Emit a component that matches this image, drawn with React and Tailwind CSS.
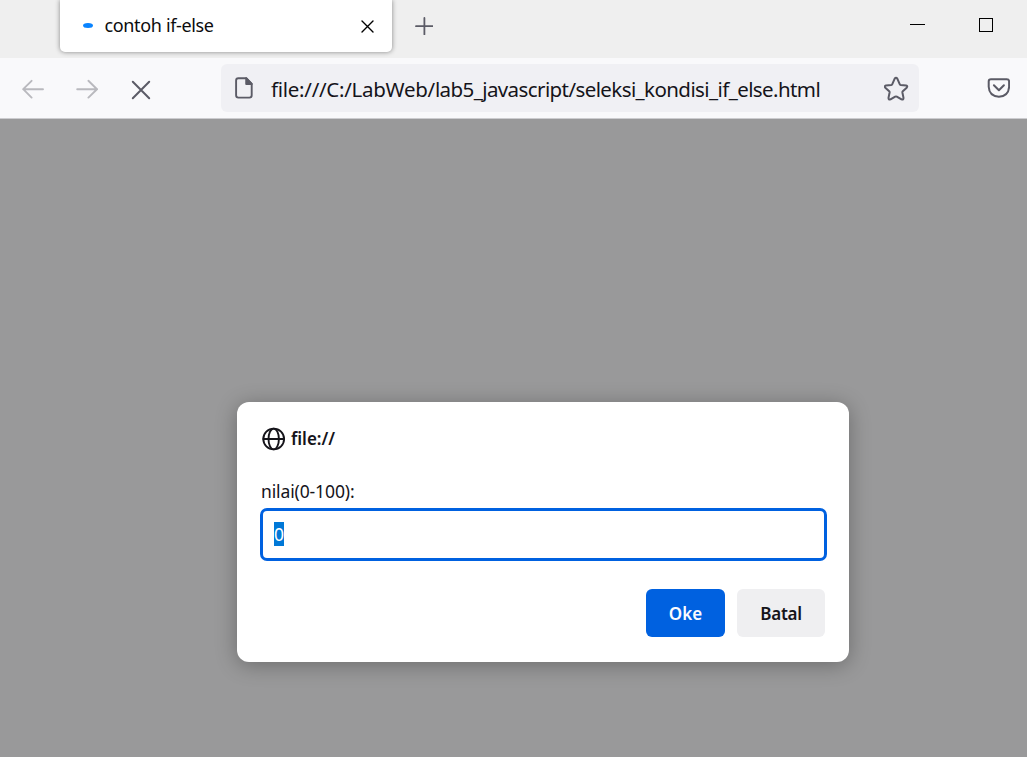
import React from "react";

function Icon({ children, className, viewBox, width = 1.6 }) {
  return (
    <svg
      className={className}
      viewBox={viewBox}
      fill="none"
      stroke="currentColor"
      strokeWidth={width}
      strokeLinecap="round"
      strokeLinejoin="round"
    >
      {children}
    </svg>
  );
}

function TabStrip() {
  return (
    <header className="flex h-[58px] items-start bg-[#efefef] pl-[60px]">
      <div className="flex h-[52px] w-[332px] shrink-0 items-center rounded-b-[5px] bg-white pl-[23px] pr-[18px] shadow-[0_0_5px_rgba(0,0,0,0.45)]">
        <span className="mb-[2px] h-[5px] w-[10px] shrink-0 rounded-[50%] bg-[#0a84ff]" />
        <span className="mb-[3px] ml-[11.5px] whitespace-nowrap text-[18px] leading-6 tracking-[-0.35px] text-[#0c0c0d]">
          contoh if-else
        </span>
        <Icon className="ml-auto h-[13px] w-[13px] text-black" viewBox="0 0 13 13" width={1.4}>
          <path d="M1 1l11 11M12 1L1 12" />
        </Icon>
      </div>
      <Icon className="ml-[23px] mt-[17px] h-[18px] w-[18px] shrink-0 text-[#5b5b66]" viewBox="0 0 18 18" width={1.8}>
        <path d="M9.4 1v16.4M1 9.2h16.6" />
      </Icon>
      <div className="ml-auto mt-6 h-px w-[15px] bg-black" />
      <div className="ml-[54px] mr-[34px] mt-[18px] h-[14px] w-[14px] border border-black" />
    </header>
  );
}

function Toolbar() {
  return (
    <nav className="flex h-[61px] items-center border-b border-[#cccccf] bg-[#f9f9fb] pl-[22px] pr-[17px]">
      <Icon className="mt-px h-[20px] w-[22px] shrink-0 text-[#b9b9be]" viewBox="0 0 22 20" width={1.9}>
        <path d="M21 10.2H1.2M9.6 1.8L1.2 10.2l8.4 8.4" />
      </Icon>
      <Icon className="ml-8 mt-px h-[20px] w-[22px] shrink-0 text-[#b9b9be]" viewBox="0 0 22 20" width={1.9}>
        <path d="M1.2 10.2h20M12.4 1.8l8.6 8.4-8.6 8.4" />
      </Icon>
      <Icon className="ml-[33px] mt-1 h-[20px] w-[20px] shrink-0 text-[#5b5b66]" viewBox="0 0 20 20" width={2}>
        <path d="M1.8 1.8l16.4 16.4M18.2 1.8L1.8 18.2" />
      </Icon>
      <div className="ml-[70px] flex h-12 w-[698px] shrink-0 items-center rounded-[6px] bg-[#f0f0f4] pl-[13px] pr-[10px]">
        <Icon className="h-[22px] w-[19px] shrink-0 text-[#5b5b66]" viewBox="-0.4 0 19 22" width={1.9}>
          <path d="M11.8 1.2H4Q1.7 1.2 1.7 3.5V18.3Q1.7 20.6 4 20.6H15Q17.3 20.6 17.3 18.3V7z" />
          <path d="M11.8 1.2V7h5.5z" fill="currentColor" />
        </Icon>
        <span className="ml-[18px] mt-[2px] whitespace-nowrap text-[20.5px] leading-7 tracking-[-0.59px] text-[#15141a]">
          <span className="tracking-[-0.28px]">file:///C:/LabWeb/</span>
          lab5_javascript/seleksi_kondisi_if_else.html
        </span>
        <Icon className="ml-auto h-[25px] w-[25px] shrink-0 text-[#5b5b66]" viewBox="0.5 -0.3 25 25" width={2}>
          <path d="M11.2 2.3Q12.5 0.4 13.8 2.3L16.2 7.8Q16.5 8.5 17.2 8.6L22.6 9.2Q24.5 9.8 23.2 11.4L19.3 15Q18.8 15.5 18.9 16.2L20 21.6Q20 23.8 18 23.1L13.3 20.3Q12.5 19.9 11.7 20.3L7 23.1Q5 23.8 5 21.6L6.1 16.2Q6.2 15.5 5.7 15L1.8 11.4Q.5 9.8 2.4 9.2L7.8 8.6Q8.5 8.5 8.8 7.8z" />
        </Icon>
      </div>
      <Icon className="ml-auto h-[20px] w-[23px] shrink-0 text-[#5b5b66]" viewBox="-0.4 0 23 20" width={2}>
        <path d="M3.6 1.2H19.4Q21.7 1.2 21.7 3.5V8.8Q21.2 18.2 11.5 18.8Q1.8 18.2 1.3 8.8V3.5Q1.3 1.2 3.6 1.2z" />
        <path d="M6.5 7.2l5 5 5-5" />
      </Icon>
    </nav>
  );
}

function PromptDialog() {
  return (
    <section className="ml-[237px] mt-[283px] flex h-[260px] w-[612px] flex-col rounded-[12px] bg-white px-6 pt-[22px] text-[#15141a] shadow-[0_3px_21px_rgba(0,0,0,0.3)]">
      <div className="flex h-[30px] items-center">
        <Icon className="ml-px h-[24px] w-[24px]" viewBox="0 0 24 24" width={1.9}>
          <circle cx="11.7" cy="12" r="10.4" />
          <ellipse cx="11.7" cy="12" rx="5.2" ry="10.4" />
          <path d="M1.4 12h20.6" />
        </Icon>
        <span className="mb-px ml-[5px] whitespace-nowrap text-[17px] font-semibold leading-6">file://</span>
      </div>
      <label className="mt-[25px] whitespace-nowrap text-[17.5px] leading-6 tracking-[-0.12px]">nilai(0-100):</label>
      <div className="-ml-px mt-[5px] flex h-[53px] w-[567px] items-center rounded-[7px] border-[3px] border-[#0061e0] pb-px pl-[11px]">
        <span className="h-6 bg-[#0078d7] text-[17.5px] leading-6 text-white">0</span>
      </div>
      <div className="mt-7 flex justify-end gap-3 text-[17px] font-semibold">
        <button className="h-12 w-[79px] rounded-[6px] bg-[#0061e0] pt-[2px] text-[#fbfbfe]">Oke</button>
        <button className="h-12 w-[88px] rounded-[6px] bg-[#efeff1] pt-[2px] tracking-[-0.3px]">Batal</button>
      </div>
    </section>
  );
}

export default function App() {
  return (
    <div className="flex h-[757px] w-[1027px] flex-col overflow-hidden bg-[#99999a] font-['Noto_Sans','Open_Sans',sans-serif]">
      <TabStrip />
      <Toolbar />
      <main className="flex-1">
        <PromptDialog />
      </main>
    </div>
  );
}
